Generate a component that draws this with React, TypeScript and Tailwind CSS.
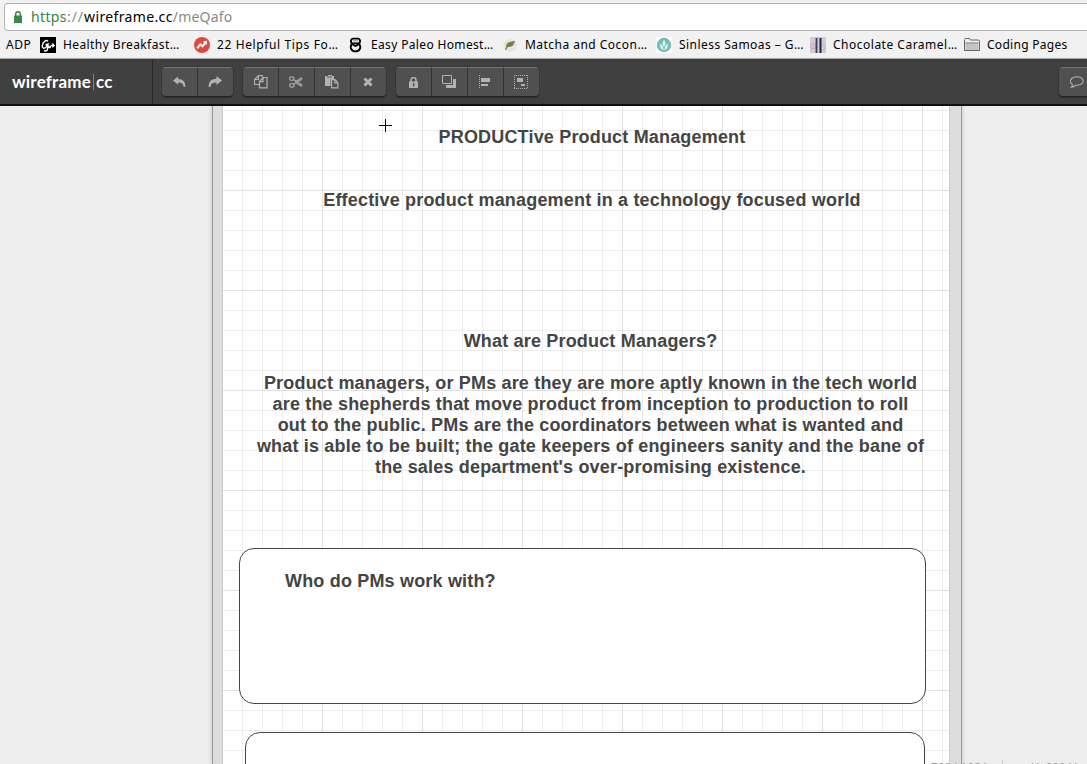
import React from "react";

type BookmarkProps = { label: string; text: string; icon?: React.ReactNode; iconBox?: string };

function Bookmark({ label, text, icon, iconBox }: BookmarkProps) {
  return (
    <div className="flex shrink-0 items-center">
      {icon && <span className={`flex h-4 shrink-0 items-center ${iconBox ?? ""}`}>{icon}</span>}
      <span className={`block shrink-0 whitespace-nowrap ${text}`}>{label}</span>
    </div>
  );
}

function ToolButton({ children, first }: { children: React.ReactNode; first?: boolean }) {
  return (
    <button className={`flex h-[29px] shrink-0 items-center justify-center border-t border-t-[#777] bg-[#505050] ${first ? "w-[35px]" : "w-9 border-l border-l-[#333] pr-px"}`}>
      {children}
    </button>
  );
}

function ToolGroup({ children, className }: { children: React.ReactNode; className: string }) {
  return (
    <div className={`flex h-[29px] shrink-0 overflow-hidden rounded-[4px] shadow-[0_1px_1px_#222,0_0_0_1px_#393939,0_2px_1px_#333] ${className}`}>
      {children}
    </div>
  );
}

const heading = "absolute whitespace-nowrap text-center text-[18px] font-bold leading-[21px] tracking-[0.18px] text-[#444]";

export default function App() {
  return (
    <div className="flex h-[764px] w-[1087px] flex-col overflow-hidden bg-[#ededed] font-['Liberation_Sans',sans-serif]">
      <div className="flex h-[59px] shrink-0 flex-col border-b border-[#a8a8a8] bg-[#f1f1f1] pt-[3px] font-['Noto_Sans',sans-serif] text-black">
        <div className="ml-1 flex h-7 w-[1100px] shrink-0 items-center rounded-[3px] border border-[#b2b2b2] bg-white pl-[9px]">
          <svg width="8" height="12" viewBox="0 0 8 12" className="mr-[9px]">
            <path d="M1.700 5V3a2.300 2.300 0 0 1 4.600 0v2" fill="none" stroke="#3d7f43" strokeWidth="1.400" />
            <path d="M0 4.500h8V12H0z" fill="#3d8546" />
          </svg>
          <span className="whitespace-nowrap text-[14px] leading-5 tracking-[0.36px] text-[#888]">
            <span className="text-[#3d7f43]">https</span>
            <span className="tracking-[1px]">://</span>
            <span className="text-black">wireframe.cc</span>
            <span className="tracking-[0.2px]">/meQafo</span>
          </span>
        </div>
        <div className="flex h-[27px] items-center pl-[6px] text-[12px] leading-4">
          <Bookmark label="ADP" text="w-[34px] tracking-[0.5px]" />
          <Bookmark
            label="Healthy Breakfast…"
            text="w-[131px] tracking-[0.4px]"
            iconBox="w-[23px]"
            icon={
              <svg width="16" height="16" viewBox="0 0 16 16">
                <path fill="#000" d="M0 0h16v16H0z" />
                <path d="M8 4.200C6 2.300 2.500 5.500 2.300 9c-.1 3 2.800 2.800 4.400.4L8 7 5.500 8M8 7l-.7 6c-.6 1.500-3 1.300-2.800-.2M9 8.500c-1 3 1 3 1.800.2M10.800 8.400h3m-1.400-2 1.700 2-1.800 2" fill="none" stroke="#fff" strokeWidth="1.400" />
              </svg>
            }
          />
          <Bookmark
            label="22 Helpful Tips Fo…"
            text="w-[132px] tracking-[0.62px]"
            iconBox="w-[23px]"
            icon={
              <svg width="16" height="16" viewBox="0 0 16 16">
                <circle cx="8" cy="8" r="8" fill="#dd4b3e" />
                <path d="m3.200 11.300 3-4 2.300 2 2.400-3" fill="none" stroke="#fff" strokeWidth="2" />
                <path d="m8.700 4.700 4.200-1.100-.1 4.400z" fill="#fff" />
              </svg>
            }
          />
          <Bookmark
            label="Easy Paleo Homest…"
            text="w-[132px] tracking-[0.35px]"
            iconBox="w-[22px]"
            icon={
              <svg width="13" height="16" viewBox="0 0 13 16">
                <path d="M3 6.800C1.200 4.500 1.800 1.800 4 1.600h5c2.200.2 2.800 2.900 1 5.200 2.400 2.700 1.300 7.600-3.500 7.600S.6 9.500 3 6.800Z" fill="none" stroke="#000" strokeWidth="1.900" />
                <path d="M2.500 6.400h8M3 6.800l1.800 1.500 1.700.8 1.700-.8L10 6.800" fill="none" stroke="#000" strokeWidth="1.700" />
                <path d="M4 3.800h5" stroke="#666" strokeWidth=".7" />
              </svg>
            }
          />
          <Bookmark
            label="Matcha and Cocon…"
            text="w-[131px] tracking-[0.47px]"
            iconBox="w-[22px]"
            icon={
              <svg width="14" height="16" viewBox="0 0 14 16">
                <circle cx="7" cy="8.500" r="6.800" fill="#e8e6dc" />
                <path d="M3 10C3 5 6 5 12 4c-1 5-4 6.500-8 5.500z" fill="#7c8456" />
                <path d="m2.500 13 1.500-3 4-3" fill="none" stroke="#575d3b" />
              </svg>
            }
          />
          <Bookmark
            label="Sinless Samoas – G…"
            text="w-[131px] tracking-[0.45px]"
            iconBox="w-[23px]"
            icon={
              <svg width="16" height="16" viewBox="0 0 16 16">
                <path fill="#fff" d="M0 0h16v16H0z" />
                <circle cx="8" cy="8" r="7.200" fill="#72bdb5" />
                <path d="M8 2.500C6 5 6 8 8 10c2-2 2-5 0-7.500ZM4 6.500c0 3.500 1.200 6 3.500 7C7.500 10.500 6.500 8 4 6.500ZM12 6.500c0 3.500-1.200 6-3.500 7C8.500 10.500 9.500 8 12 6.500Z" fill="#e2f3f0" />
              </svg>
            }
          />
          <Bookmark
            label="Chocolate Caramel…"
            text="w-[131px] tracking-[0.5px]"
            iconBox="w-[23px]"
            icon={
              <svg width="16" height="16" viewBox="0 0 16 16">
                <path fill="#cfcdd0" d="M0 0h16v16H0z" />
                <circle cx="3" cy="9" r="2.700" fill="none" stroke="#da9bd0" />
                <circle cx="3" cy="9" r=".8" fill="#da9bd0" />
                <circle cx="12.500" cy="10.500" r="2.600" fill="none" stroke="#dda9d3" />
                <path d="M6.500 1v15" stroke="#3c3c5e" strokeWidth="1.800" />
                <path d="M10.500 1v15" stroke="#22244c" strokeWidth="2" />
              </svg>
            }
          />
          <Bookmark
            label="Coding Pages"
            text="w-[100px] tracking-[0.28px]"
            iconBox="w-[23px]"
            icon={
              <svg width="16" height="14" viewBox="0 0 16 14">
                <path d="M.5 12.500V1.500l.7-1h4.300l1 1.500h8l1 1v9.500z" fill="#eee" stroke="#666" />
                <path d="M1.500 5.500h13v6.500h-13z" fill="#c4c4c4" />
                <path d="M1.500 5h13" stroke="#777" />
              </svg>
            }
          />
        </div>
      </div>

      <div className="flex h-[47px] shrink-0 border-b-2 border-[#111] bg-[#404040]">
        <div className="flex w-[153px] shrink-0 items-center border-r border-[#282828] pl-3 font-['Lato',sans-serif] text-[17px] font-bold leading-5 tracking-[0.2px] text-white">
          <span className="w-[80px]">wireframe</span>
          <span className="ml-px mr-0.5 h-4 w-px shrink-0 bg-[#e0614a]" />
          <span>cc</span>
        </div>
        <div className="flex flex-1 pt-2">
          <ToolGroup className="ml-[9px] w-[71px]">
            <ToolButton first>
              <svg width="13" height="12" viewBox="0 0 14 12"><path d="M0 4.500 5.500 0v2.700c5 .1 8 2.800 7.800 8.300h-2C11.300 7.500 9 6.500 5.500 6.500V9z" fill="#b2b2b2" /></svg>
            </ToolButton>
            <ToolButton>
              <svg width="14" height="12" viewBox="0 0 14 12"><path d="M14 4.500 8.500 0v2.700c-5 .1-8 2.800-7.800 8.300h2C2.700 7.500 5 6.500 8.500 6.500V9z" fill="#b2b2b2" /></svg>
            </ToolButton>
          </ToolGroup>
          <ToolGroup className="ml-[10px] w-[143px]">
            <ToolButton first>
              <svg width="14" height="14" viewBox="0 0 14 14" fill="none" stroke="#b2b2b2" strokeWidth="1.200">
                <path d="M5.500 9.500h-5v-5l4-4h3.800v2M.5 4.500h4v-4" />
                <path d="M5.500 12.900V6.500l3.500-4h4v10.400zM5.500 6.700H9V2.500" />
              </svg>
            </ToolButton>
            <ToolButton>
              <svg width="14" height="12" viewBox="0 0 14 12" fill="none" stroke="#a5a5a5" strokeWidth="1.200">
                <ellipse cx="2.800" cy="2.600" rx="2.200" ry="1.800" />
                <ellipse cx="2.800" cy="9.400" rx="2.200" ry="1.800" />
                <path d="m4.500 3.700 8.500 5M4.500 8.300l8.500-5M6 6l6-4 1.300.8M6 6l6 4 1.300-.8" />
              </svg>
            </ToolButton>
            <ToolButton>
              <svg width="14" height="14" viewBox="0 0 14 14">
                <path d="M0 1h3V0h4v1h2v3H6v7H0z" fill="#b2b2b2" />
                <path d="M5.500 4h5l3.500 3.500V14H5.500z" fill="#505050" />
                <path d="M6.600 4.600H10l2.900 2.900v5.400H6.600zM9.800 4.800v3h3" fill="none" stroke="#b2b2b2" strokeWidth="1.200" />
                <path d="M2 2h5" stroke="#505050" />
              </svg>
            </ToolButton>
            <ToolButton>
              <svg width="10" height="10" viewBox="0 0 10 10"><path d="m1.500 1.500 7 7m0-7-7 7" stroke="#b2b2b2" strokeWidth="3" /></svg>
            </ToolButton>
          </ToolGroup>
          <ToolGroup className="ml-[10px] w-[143px]">
            <ToolButton first>
              <svg width="9" height="11" viewBox="0 0 9 11">
                <path d="M2 5V3a2.500 2.500 0 0 1 5 0v2" fill="none" stroke="#b2b2b2" strokeWidth="1.500" />
                <path d="M0 4.500h9V11H0z" fill="#b2b2b2" />
                <path d="M4 6h1.300v3.500H4z" fill="#505050" />
              </svg>
            </ToolButton>
            <ToolButton>
              <svg width="14" height="14" viewBox="0 0 14 14">
                <path d="M11 4h3v9H4v-3h7z" fill="#b2b2b2" />
                <path d="M.5.5h9v8h-9z" fill="none" stroke="#b2b2b2" />
              </svg>
            </ToolButton>
            <ToolButton>
              <svg width="12" height="14" viewBox="0 0 12 14">
                <path d="M.5 0v14" stroke="#b2b2b2" strokeDasharray="1 1" />
                <path d="M2 3h9v4H2zM2 9h7v2H2z" fill="#b2b2b2" />
              </svg>
            </ToolButton>
            <ToolButton>
              <svg width="14" height="14" viewBox="0 0 14 14">
                <path d="M.5 0v14M13.500 0v14M0 .5h14M0 13.500h14" stroke="#b2b2b2" strokeDasharray="1 1" />
                <path d="M3 3h6v4H3zM7 9h4v2H7z" fill="#b2b2b2" />
              </svg>
            </ToolButton>
          </ToolGroup>
          <ToolGroup className="ml-[520px] w-[71px]">
            <ToolButton first>
              <svg width="14" height="12" viewBox="0 0 14 12"><path d="M2.300 8.400C-2 5 1.500.8 7 .8S14 4.500 12.500 7C11 9 8.500 9.400 5.500 9.200 4.500 10.500 3 11.200 1.300 11.300c1-1 1.300-1.700 1-2.900Z" fill="none" stroke="#b2b2b2" strokeWidth="1.100" /></svg>
            </ToolButton>
            <ToolButton>{null}</ToolButton>
          </ToolGroup>
        </div>
      </div>

      <div className="relative flex min-h-0 flex-1 pl-[212px]">
        <div className="flex w-[750px] border-x border-[#999] bg-[#ddd] pl-[9px] pr-[11px] shadow-[0_0_4px_rgba(0,0,0,0.2)]">
          <div className="w-[728px] border-x border-[#ccc] bg-white">
            <svg width="726" height="658" className="block">
              <defs>
                <pattern id="minor" width="20" height="20" patternUnits="userSpaceOnUse" x="-1" y="4">
                  <path d="M0 0h20v1H0zM0 0h1v20H0z" fill="#ededed" />
                </pattern>
                <pattern id="major" width="100" height="100" patternUnits="userSpaceOnUse" x="-1" y="-16">
                  <path d="M0 0h100v1H0zM0 0h1v100H0z" fill="#dfdfdf" />
                </pattern>
              </defs>
              <rect width="726" height="658" fill="url(#minor)" />
              <rect width="726" height="658" fill="url(#major)" />
            </svg>
          </div>
        </div>

        <h1 className={`${heading} left-[392px] top-[21px] w-[400px]`}>PRODUCTive Product Management</h1>
        <h2 className={`${heading} left-[292px] top-[84px] w-[600px]`}>Effective product management in a technology focused world</h2>
        <h2 className={`${heading} left-[390px] top-[225px] w-[401px]`}>What are Product Managers?</h2>
        <p className={`${heading} left-[240px] top-[267px] w-[701px]`}>
          Product managers, or PMs are they are more aptly known in the tech world<br />
          are the shepherds that move product from inception to production to roll<br />
          out to the public. PMs are the coordinators between what is wanted and<br />
          what is able to be built; the gate keepers of engineers sanity and the bane of<br />
          the sales department&#39;s over-promising existence.
        </p>
        <div className="absolute left-[239px] top-[442px] h-[156px] w-[687px] rounded-[15px] border border-[#444] bg-white" />
        <h2 className={`${heading} left-[285px] top-[465px]`}>Who do PMs work with?</h2>
        <div className="absolute left-[245px] top-[626px] h-[156px] w-[680px] rounded-[15px] border border-[#444] bg-white" />

        <svg width="13" height="13" className="absolute left-[379px] top-[13px]">
          <path d="M0 6h13v1H0zM6 0h1v13H6z" fill="#000" />
        </svg>
        <div className="absolute left-[931px] top-[654px] flex whitespace-nowrap text-[12px] leading-[16px] text-[#999]">
          <span className="w-[71px]">720 | 1024</span>
          <span className="h-5 w-px bg-[#ccc]" />
          <span className="ml-7">X: 280 Y:</span>
        </div>
      </div>
    </div>
  );
}
